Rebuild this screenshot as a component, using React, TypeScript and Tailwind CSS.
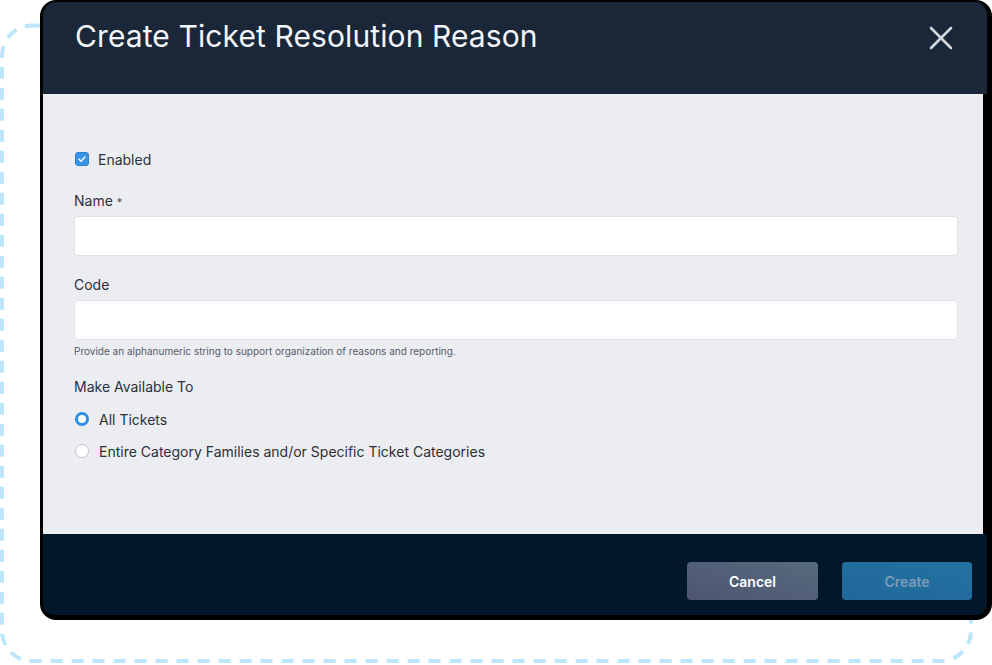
import React from "react";

const CloseIcon = () => (
  <svg width="24" height="24" viewBox="0 0 24 24" fill="none">
    <path d="M2 2L22 22M22 2L2 22" stroke="#d3d6dc" strokeWidth="2.6" strokeLinecap="round" />
  </svg>
);

const Checkbox = () => (
  <span className="flex h-[14px] w-[14px] items-center justify-center rounded-[3px] border border-[#2f80cf] bg-[#3b93e3]">
    <svg width="10" height="10" viewBox="0 0 10 10" fill="none">
      <path d="M2 5.2L4.1 7.2L8 3" stroke="#ffffff" strokeWidth="1.4" strokeLinecap="round" strokeLinejoin="round" />
    </svg>
  </span>
);

const Radio = ({ checked }: { checked: boolean }) =>
  checked ? (
    <span className="block h-[14px] w-[14px] rounded-full border-[3.5px] border-[#2d8fe5] bg-white" />
  ) : (
    <span className="block h-[14px] w-[14px] rounded-full border border-[#c3c6cc] bg-white" />
  );

const Field = ({ label, required }: { label: string; required?: boolean }) => (
  <>
    <label className="block h-[20px] text-[14px] leading-[20px] text-[#2b303b]">
      {label}
      {required && <span className="ml-[4px] text-[11px] text-[#4a505c]">*</span>}
    </label>
    <div className="mt-[5px] h-[40px] w-[884px] rounded-[4px] border border-[#dcdfe4] bg-white" />
  </>
);

export default function App() {
  return (
    <div
      className="relative h-[665px] w-[992px] overflow-hidden bg-white"
      style={{ fontFamily: "Inter, 'Noto Sans', sans-serif" }}
    >
      {/* dashed backdrop */}
      <svg className="absolute left-0 top-0" width="992" height="665">
        <rect
          x="2"
          y="25.5"
          width="969"
          height="635.5"
          rx="30"
          fill="none"
          stroke="#bde5fb"
          strokeWidth="4"
          strokeDasharray="12 9"
        />
      </svg>

      <div className="relative ml-[40px] flex h-[620px] w-[952px] flex-col overflow-hidden rounded-[16px] border-b-[5px] border-l-[3px] border-r-[5px] border-t-[2px] border-black bg-black">
        <header className="flex h-[92px] shrink-0 items-start justify-between bg-[#1a2738] pl-[32px] pr-[34px] pt-[14px]">
          <h1 className="text-[30px] font-normal leading-[40px] tracking-[0.1px] text-[#f3f5f8]">
            Create Ticket Resolution Reason
          </h1>
          <button className="mt-[10px]">
            <CloseIcon />
          </button>
        </header>

        <main className="mr-[4px] h-[440px] shrink-0 bg-[#ecedf1] pl-[31px] pr-[26px] pt-[55px]">
          <div className="flex h-[20px] items-center gap-[9px] pl-[1px]">
            <Checkbox />
            <span className="text-[14px] text-[#2b303b]">Enabled</span>
          </div>

          <div className="mt-[22px]">
            <Field label="Name" required />
          </div>

          <div className="mt-[19px]">
            <Field label="Code" />
          </div>

          <p className="mt-[4px] h-[14px] text-[10px] leading-[14px] text-[#555c69]">
            Provide an alphanumeric string to support organization of reasons and reporting.
          </p>

          <p className="mt-[19px] h-[20px] text-[14px] leading-[20px] text-[#2b303b]">Make Available To</p>

          <div className="mt-[12px] flex h-[20px] items-center gap-[10px] pl-[1px]">
            <Radio checked />
            <span className="text-[14px] text-[#2b303b]">All Tickets</span>
          </div>
          <div className="mt-[12px] flex h-[20px] items-center gap-[10px] pl-[1px]">
            <Radio checked={false} />
            <span className="text-[14px] text-[#2b303b]">
              Entire Category Families and/or Specific Ticket Categories
            </span>
          </div>
        </main>

        <footer className="flex flex-1 items-end justify-end gap-[24px] bg-[#03172a] pb-[15px] pr-[15px]">
          <button className="h-[38px] w-[131px] rounded-[4px] bg-gradient-to-tr from-[#4e5571] to-[#566a7d] text-[14px] font-semibold text-white">
            Cancel
          </button>
          <button className="h-[38px] w-[130px] rounded-[4px] bg-gradient-to-tr from-[#21679a] to-[#2372a2] text-[14px] font-semibold text-[#7b9db8]">
            Create
          </button>
        </footer>
      </div>
    </div>
  );
}
